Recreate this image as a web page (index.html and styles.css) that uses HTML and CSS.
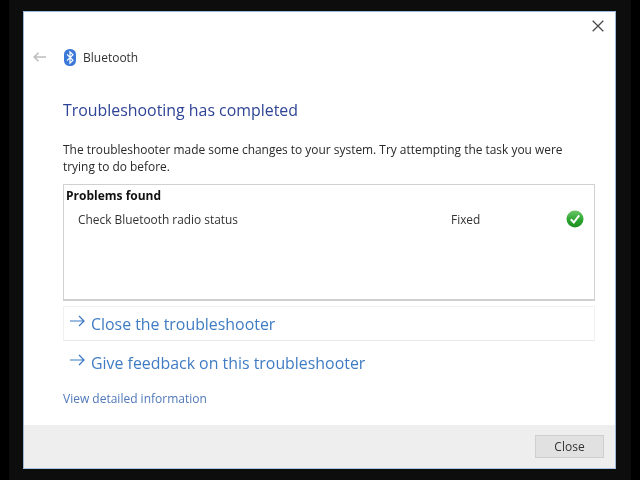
FILE: index.html
```html
<!DOCTYPE html>
<html lang="en">
<head>
<meta charset="utf-8">
<title>Bluetooth troubleshooter</title>
<link rel="stylesheet" href="styles.css">
</head>
<body>
<main class="screen">
  <section class="window">
    <div class="close-row">
      <svg class="close-icon" width="12" height="12" viewBox="0 0 12 12"><path d="M.7.7l10.6 10.6M11.3.7L.7 11.3" stroke="#4a4a4a" stroke-width="1.3" fill="none"/></svg>
    </div>
    <header class="nav">
      <svg class="back-icon" width="13" height="10" viewBox="0 0 13 10"><path d="M5.5.7L1.2 5l4.3 4.3M1.2 5H13" stroke="#bdbdbd" stroke-width="1.6" fill="none"/></svg>
      <svg class="bt-icon" width="12" height="17" viewBox="0 0 12 17"><rect width="12" height="17" rx="5.5" fill="#3b78d8"/><path d="M3 5.3l6 6-3 2.9V2.8l3 2.9-6 5.9" stroke="#fff" stroke-width="1.2" fill="none"/></svg>
      <span class="nav-title">Bluetooth</span>
    </header>
    <div class="content">
      <h1 class="heading">Troubleshooting has completed</h1>
      <p class="summary">The troubleshooter made some changes to your system. Try attempting the task you were trying to do before.</p>
      <div class="results">
        <div class="results-title">Problems found</div>
        <div class="result-row">
          <span class="result-name">Check Bluetooth radio status</span>
          <span class="result-status">Fixed</span>
          <svg class="check-icon" width="18" height="18" viewBox="0 0 18 18">
            <defs><linearGradient id="green" x1="0" y1="0" x2="0" y2="1"><stop offset="0" stop-color="#6fc56a"/><stop offset=".55" stop-color="#2ba52f"/><stop offset="1" stop-color="#1c8f25"/></linearGradient></defs>
            <circle cx="9" cy="9" r="8.5" fill="url(#green)"/>
            <path d="M4.8 9.2l3 3.2 5.4-7" stroke="#fff" stroke-width="2" fill="none"/>
          </svg>
        </div>
      </div>
      <a class="action action-boxed" href="#">
        <svg class="arrow-icon" width="15" height="12" viewBox="0 0 15 12"><path d="M9 1l5 5-5 5M14 6H0" stroke="#3a78c4" stroke-width="1.2" fill="none"/></svg>
        <span>Close the troubleshooter</span>
      </a>
      <a class="action" href="#">
        <svg class="arrow-icon" width="15" height="12" viewBox="0 0 15 12"><path d="M9 1l5 5-5 5M14 6H0" stroke="#3a78c4" stroke-width="1.2" fill="none"/></svg>
        <span>Give feedback on this troubleshooter</span>
      </a>
      <a class="details" href="#">View detailed information</a>
    </div>
    <footer class="footer">
      <button class="close-button" type="button">Close</button>
    </footer>
  </section>
</main>
</body>
</html>
```
FILE: styles.css
```css
* { box-sizing: border-box; }
html, body { margin: 0; height: 100%; background: #000; }
body { font-family: "Open Sans", "Noto Sans", sans-serif; overflow: hidden; }
.screen {
  width: 622px; height: 480px; margin-left: 9px;
  padding: 11px 15px 11px 14px;
  background: #0d0d0d;
}
.window {
  width: 593px; height: 458px;
  display: flex; flex-direction: column;
  background: #fff;
  border: 1px solid #9db8d6;
  border-bottom-color: #a9c4e0;
  filter: blur(0.35px);
}
.close-row { display: flex; justify-content: flex-end; padding: 8px 11px 0 0; height: 26px; }
.nav { display: flex; align-items: center; height: 32px; padding-left: 9px; margin-top: 3px; }
.back-icon { margin-right: 18px; }
.bt-icon { margin-right: 7px; }
.nav-title { font-size: 12px; color: #333; }
.content { flex: 1; padding: 0 20px 0 39px; }
.heading { margin: 25px 0 0; font-size: 15.9px; line-height: 24px; font-weight: 400; color: #2f4496; }
.summary { margin: 19px 0 0; font-size: 11.93px; line-height: 17px; color: #2a2a2a; }
.results { height: 117px; margin-top: 9px; padding: 2px 2px; border: 1px solid #d0d0d0; border-bottom-width: 2px; }
.results-title { font-size: 12px; line-height: 17px; font-weight: 700; color: #111; }
.result-row { display: flex; align-items: center; height: 20px; margin-top: 5px; padding-left: 12px; font-size: 11.9px; color: #333; }
.result-name { width: 373px; }
.result-status { width: 115px; }
.action { display: flex; align-items: center; gap: 6px; height: 39px; padding-left: 7px; font-size: 15.9px; color: #3f7cc4; text-decoration: none; }
.action-boxed { height: 35px; margin-top: 5px; margin-bottom: 2px; padding-left: 6px; border: 1px solid #f0f0f0; border-bottom-color: #e8e8e8; }
.arrow-icon { margin-top: -6px; }
.details { display: block; margin-top: 8px; font-size: 12px; line-height: 17px; color: #4f78b8; text-decoration: none; }
.footer { display: flex; justify-content: flex-end; align-items: flex-start; height: 43px; padding: 10px 11px 0 0; background: #eeeeee; }
.close-button { width: 69px; height: 23px; padding: 0; font: inherit; font-size: 12px; color: #333; background: #e1e1e1; border: 1px solid #cfcfcf; }
```
